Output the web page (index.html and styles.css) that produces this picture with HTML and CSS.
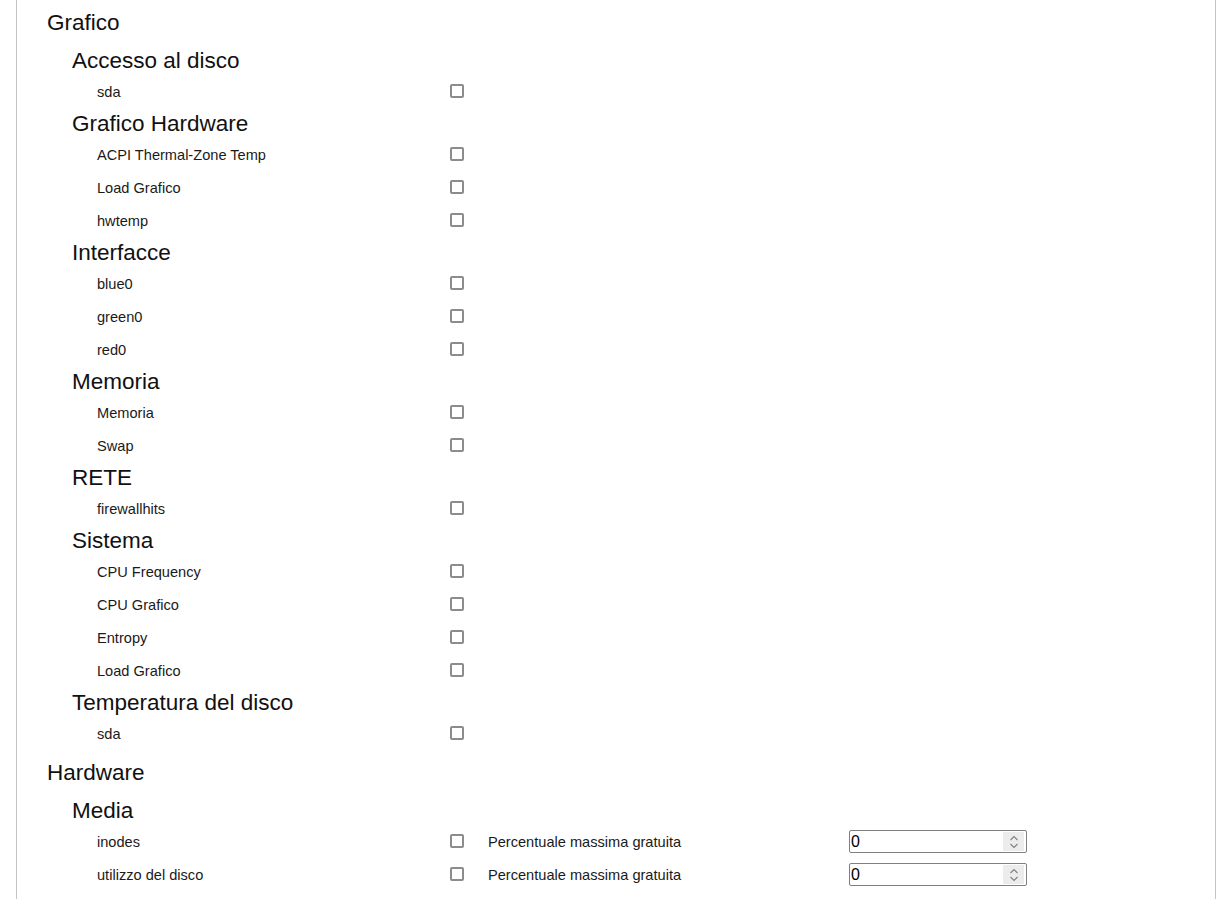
FILE: index.html
```html
<!DOCTYPE html>
<html lang="it">
<head>
<meta charset="utf-8">
<title>Grafico</title>
<link rel="stylesheet" href="styles.css">
</head>
<body>
<div class="panel">
  <section class="group">
    <h2 class="h1">Grafico</h2>

    <h3 class="h2">Accesso al disco</h3>
    <div class="row"><span class="label">sda</span><span class="box"><input type="checkbox" class="check"></span></div>

    <h3 class="h2">Grafico Hardware</h3>
    <div class="row"><span class="label">ACPI Thermal-Zone Temp</span><span class="box"><input type="checkbox" class="check"></span></div>
    <div class="row"><span class="label">Load Grafico</span><span class="box"><input type="checkbox" class="check"></span></div>
    <div class="row"><span class="label">hwtemp</span><span class="box"><input type="checkbox" class="check"></span></div>

    <h3 class="h2">Interfacce</h3>
    <div class="row"><span class="label">blue0</span><span class="box"><input type="checkbox" class="check"></span></div>
    <div class="row"><span class="label">green0</span><span class="box"><input type="checkbox" class="check"></span></div>
    <div class="row"><span class="label">red0</span><span class="box"><input type="checkbox" class="check"></span></div>

    <h3 class="h2">Memoria</h3>
    <div class="row"><span class="label">Memoria</span><span class="box"><input type="checkbox" class="check"></span></div>
    <div class="row"><span class="label">Swap</span><span class="box"><input type="checkbox" class="check"></span></div>

    <h3 class="h2">RETE</h3>
    <div class="row"><span class="label">firewallhits</span><span class="box"><input type="checkbox" class="check"></span></div>

    <h3 class="h2">Sistema</h3>
    <div class="row"><span class="label">CPU Frequency</span><span class="box"><input type="checkbox" class="check"></span></div>
    <div class="row"><span class="label">CPU Grafico</span><span class="box"><input type="checkbox" class="check"></span></div>
    <div class="row"><span class="label">Entropy</span><span class="box"><input type="checkbox" class="check"></span></div>
    <div class="row"><span class="label">Load Grafico</span><span class="box"><input type="checkbox" class="check"></span></div>

    <h3 class="h2">Temperatura del disco</h3>
    <div class="row"><span class="label">sda</span><span class="box"><input type="checkbox" class="check"></span></div>
  </section>

  <section class="group">
    <h2 class="h1">Hardware</h2>

    <h3 class="h2">Media</h3>
    <div class="row">
      <span class="label">inodes</span>
      <span class="box"><input type="checkbox" class="check"></span>
      <span class="label">Percentuale massima gratuita</span>
      <span class="num">
        <input type="text" class="num-input" value="0">
        <span class="spin">
          <svg width="12" height="18" viewBox="0 0 12 18"><path d="M2.5 7 L6 3.5 L9.5 7" fill="none" stroke="#808080" stroke-width="1.1"/><path d="M2.5 11 L6 14.5 L9.5 11" fill="none" stroke="#808080" stroke-width="1.1"/></svg>
        </span>
      </span>
    </div>
    <div class="row">
      <span class="label">utilizzo del disco</span>
      <span class="box"><input type="checkbox" class="check"></span>
      <span class="label">Percentuale massima gratuita</span>
      <span class="num">
        <input type="text" class="num-input" value="0">
        <span class="spin">
          <svg width="12" height="18" viewBox="0 0 12 18"><path d="M2.5 7 L6 3.5 L9.5 7" fill="none" stroke="#808080" stroke-width="1.1"/><path d="M2.5 11 L6 14.5 L9.5 11" fill="none" stroke="#808080" stroke-width="1.1"/></svg>
        </span>
      </span>
    </div>
  </section>
</div>
</body>
</html>
```

FILE: styles.css
```css
html, body {
  margin: 0;
  padding: 0;
  background: #ffffff;
}

body {
  font-family: "Liberation Sans", Arial, sans-serif;
  color: #111111;
}

.panel {
  box-sizing: border-box;
  width: 1200px;
  margin-left: 16px;
  min-height: 100vh;
  border-left: 1px solid #c4c4c4;
  border-right: 1px solid #c4c4c4;
  padding: 0 0 20px 30px;
}

.h1 {
  margin: 0;
  font-size: 22.5px;
  font-weight: normal;
  line-height: 30px;
  padding: 8px 0 7px;
}

.h2 {
  margin: 0 0 0 25px;
  font-size: 22.5px;
  font-weight: normal;
  line-height: 30px;
  position: relative;
  top: 1px;
}

.row {
  display: grid;
  grid-template-columns: 353px 38px 361px 178px;
  align-items: center;
  height: 33px;
  margin-left: 50px;
  font-size: 14.6px;
  color: #1a1a1a;
}

.label {
  white-space: nowrap;
}

.box {
  display: flex;
  align-items: center;
  position: relative;
  top: -1px;
}

.check {
  appearance: none;
  -webkit-appearance: none;
  box-sizing: border-box;
  width: 14px;
  height: 14px;
  margin: 0;
  border: 2px solid #8c8c8c;
  border-radius: 2px;
  background: #ffffff;
}

.num {
  position: relative;
  display: block;
  width: 178px;
  height: 23px;
}

.num-input {
  box-sizing: border-box;
  width: 178px;
  height: 23px;
  margin: 0;
  padding: 0 24px 0 1px;
  border: 1px solid #808080;
  border-radius: 2px;
  font-family: "Liberation Sans", Arial, sans-serif;
  font-size: 16px;
  color: #000000;
  background: #ffffff;
}

.spin {
  position: absolute;
  top: 2px;
  right: 3px;
  width: 21px;
  height: 19px;
  background: #ececec;
  display: flex;
  align-items: center;
  justify-content: center;
}
```
